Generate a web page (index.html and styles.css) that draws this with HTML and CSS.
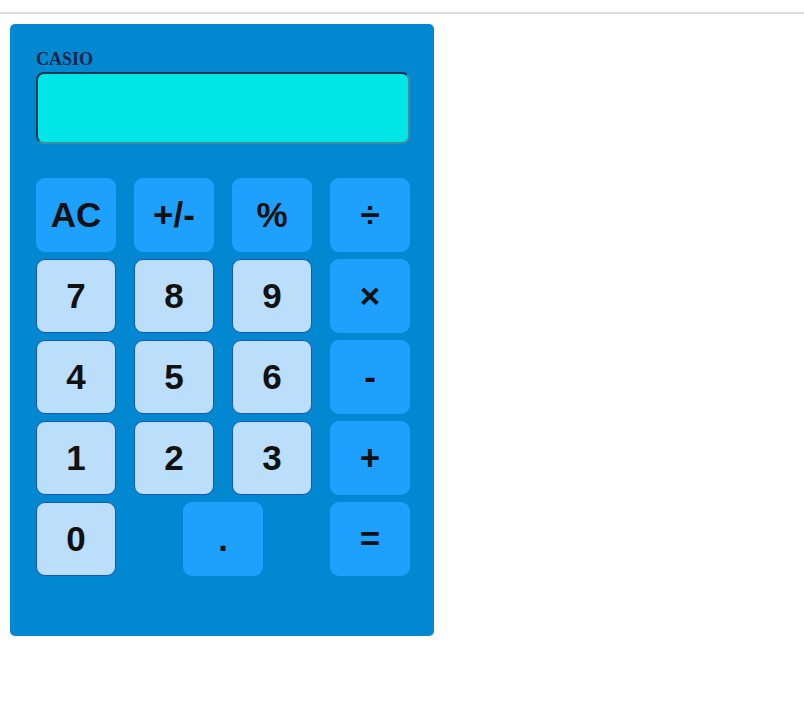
FILE: index.html
```html
<!DOCTYPE html>
<html lang="en">
<head>
<meta charset="utf-8">
<title>Calculator</title>
<link rel="stylesheet" href="styles.css">
</head>
<body>
<div class="topbar"></div>
<div class="calculator">
  <div class="brand">CASIO</div>
  <div class="display"></div>
  <div class="keypad">
    <div class="row">
      <button class="key op">AC</button>
      <button class="key op">+/-</button>
      <button class="key op">%</button>
      <button class="key op">÷</button>
    </div>
    <div class="row">
      <button class="key num">7</button>
      <button class="key num">8</button>
      <button class="key num">9</button>
      <button class="key op">×</button>
    </div>
    <div class="row">
      <button class="key num">4</button>
      <button class="key num">5</button>
      <button class="key num">6</button>
      <button class="key op">-</button>
    </div>
    <div class="row">
      <button class="key num">1</button>
      <button class="key num">2</button>
      <button class="key num">3</button>
      <button class="key op">+</button>
    </div>
    <div class="row">
      <button class="key num">0</button>
      <button class="key op">.</button>
      <button class="key op">=</button>
    </div>
  </div>
</div>
</body>
</html>
```

FILE: styles.css
```css
html, body {
  margin: 0;
  padding: 0;
  background: #ffffff;
}

.topbar {
  height: 12px;
  border-bottom: 2px solid #dcdcdc;
}

.calculator {
  box-sizing: border-box;
  margin: 10px 0 0 10px;
  width: 424px;
  height: 612px;
  padding: 25px 24px 60px 26px;
  background: #0288d1;
  border-radius: 5px;
}

.brand {
  font-family: "Liberation Serif", "Times New Roman", serif;
  font-weight: bold;
  font-size: 18px;
  line-height: 20px;
  color: #0b2545;
  margin-bottom: 3px;
}

.display {
  box-sizing: border-box;
  height: 72px;
  background: #00e5e5;
  border-radius: 8px;
  border-top: 2px solid #0b3550;
  border-left: 2px solid #0b3550;
  border-right: 2px solid #3c8f9c;
  border-bottom: 2px solid #3c8f9c;
}

.keypad {
  margin-top: 34px;
  display: flex;
  flex-direction: column;
  gap: 7px;
}

.row {
  display: flex;
  justify-content: space-between;
}

.key {
  box-sizing: border-box;
  width: 80px;
  height: 74px;
  padding: 0;
  margin: 0;
  border-radius: 9px;
  font-family: "Liberation Sans", Arial, sans-serif;
  font-weight: bold;
  font-size: 35px;
  color: #111111;
  display: flex;
  align-items: center;
  justify-content: center;
}

.op {
  background: #1ea0ff;
  border: none;
}

.num {
  background: #bbdefb;
  border: 1px solid #1a56b0;
}
```
